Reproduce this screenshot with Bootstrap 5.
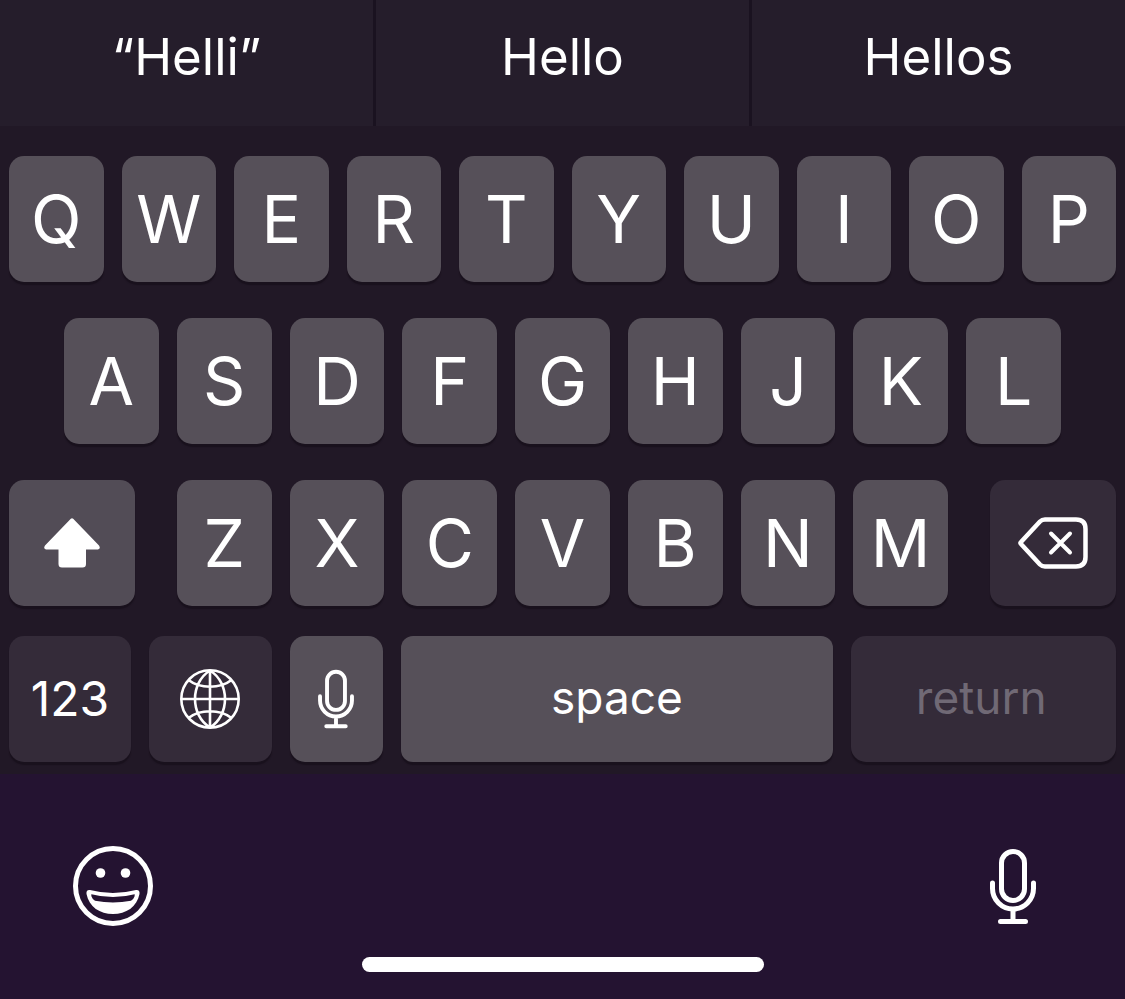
<!DOCTYPE html>
<html lang="en">
<head>
<meta charset="utf-8">
<meta name="viewport" content="width=device-width, initial-scale=1">
<title>Keyboard</title>
<link href="https://cdn.jsdelivr.net/npm/bootstrap@5.3.0/dist/css/bootstrap.min.css" rel="stylesheet">
<style>
  body { background: #241331; color: #fff; font-family: Inter, "Liberation Sans", sans-serif; }
  button { font-family: inherit; }
  .suggestions { background: #251d2b; height: 126px; }
  .suggestion { flex: 1 1 0; border: 0; background: transparent; color: #fff; font-size: 51px; line-height: 60px; padding: 0 0 12px; }
  .suggestion.middle { border: solid #1a1220; border-width: 0 3px; flex-grow: 1; }
  .keys { background: #211826; padding: 30px 9px 12px; }
  .key-row { gap: 18px; margin-bottom: 36px; }
  .key-row.inset { padding: 0 55px; }
  .key-row.tight { margin-bottom: 30px; }
  .key-row:last-child { margin-bottom: 0; }
  .key { flex: 94 1 0; min-width: 0; height: 126px; padding: 0; border: 0; border-radius: 15px; background: #565059; color: #fff; font-size: 66px; line-height: 80px; box-shadow: 0 3px 1px #19111d; display: flex; align-items: center; justify-content: center; }
  .key svg { flex: none; }
  .key.dark { background: #342b39; }
  .key.shift { flex-grow: 125; margin-right: 24px; background: #524c56; }
  .key.delete { flex-grow: 125; margin-left: 24px; }
  .key.mode { flex-grow: 122; }
  .key.globe { flex-grow: 123; }
  .key.numbers { font-size: 48px; }
  .key.word { font-size: 46px; padding-bottom: 4px; }
  .key.space { flex-grow: 432; border-radius: 12px; }
  .key.return { flex-grow: 262; color: #706975; padding-right: 4px; }
  .tray { padding: 72px 89px 0 73px; }
  .tray button { padding: 0; border: 0; background: transparent; color: #fff; line-height: 0; }
  .home-area { padding-bottom: 27px; }
  .home-bar { width: 402px; max-width: 60%; height: 15px; border-radius: 8px; background: #fff; }
</style>
</head>
<body>
<svg class="d-none" aria-hidden="true">
  <symbol id="mic" viewBox="0 -1 46 77">
    <g fill="none" stroke="currentColor" stroke-width="5" stroke-linecap="round">
      <rect x="11.500" y="2.500" width="23" height="49" rx="11.500"/>
      <path d="M2.500 34v5.500a20.500 20.500 0 0 0 41 0V34M23 61v11M10.500 72.500h25"/>
    </g>
  </symbol>
</svg>
<main class="d-flex flex-column min-vh-100">
  <div class="suggestions d-flex">
    <button type="button" class="suggestion">“Helli”</button>
    <button type="button" class="suggestion middle">Hello</button>
    <button type="button" class="suggestion">Hellos</button>
  </div>
  <div class="keys">
    <div class="key-row d-flex">
      <button type="button" class="key">Q</button>
      <button type="button" class="key">W</button>
      <button type="button" class="key">E</button>
      <button type="button" class="key">R</button>
      <button type="button" class="key">T</button>
      <button type="button" class="key">Y</button>
      <button type="button" class="key">U</button>
      <button type="button" class="key">I</button>
      <button type="button" class="key">O</button>
      <button type="button" class="key">P</button>
    </div>
    <div class="key-row inset d-flex">
      <button type="button" class="key">A</button>
      <button type="button" class="key">S</button>
      <button type="button" class="key">D</button>
      <button type="button" class="key">F</button>
      <button type="button" class="key">G</button>
      <button type="button" class="key">H</button>
      <button type="button" class="key">J</button>
      <button type="button" class="key">K</button>
      <button type="button" class="key">L</button>
    </div>
    <div class="key-row tight d-flex">
      <button type="button" class="key shift" aria-label="Shift">
        <svg width="56" height="50" viewBox="0 0 56 50" fill="currentColor"><path d="M26.800 .8Q28 -.2 29.200 .8L55 27.500Q57 31 54 31.500H42V46Q42 49.500 38.500 49.500H18Q14.500 49.500 14.500 46V31.500H2Q-1 31 1 27.500Z"/></svg>
      </button>
      <button type="button" class="key">Z</button>
      <button type="button" class="key">X</button>
      <button type="button" class="key">C</button>
      <button type="button" class="key">V</button>
      <button type="button" class="key">B</button>
      <button type="button" class="key">N</button>
      <button type="button" class="key">M</button>
      <button type="button" class="key dark delete" aria-label="Delete">
        <svg width="70" height="52" viewBox="0 0 70 52" fill="none" stroke="currentColor" stroke-width="4.500" stroke-linecap="round" stroke-linejoin="round"><path d="M27 2.500H58Q67.500 2.500 67.500 12V40Q67.500 49.500 58 49.500H27Q24 49.500 22 47.500L3 27Q2 26 3 25L22 4.500Q24 2.500 27 2.500Z"/><path stroke-width="4" d="M33 16.500L52 35.500M52 16.500L33 35.500"/></svg>
      </button>
    </div>
    <div class="key-row d-flex">
      <button type="button" class="key dark mode numbers">123</button>
      <button type="button" class="key dark globe" aria-label="Next keyboard">
        <svg width="60" height="60" viewBox="0 0 60 60" fill="none" stroke="currentColor" stroke-width="2.600"><circle cx="30" cy="30" r="28.700"/><path d="M30 1V59M1 30H59M30 1.500C10 14 10 46 30 58.500M30 1.500C50 14 50 46 30 58.500M8.500 11C20 20 40 20 51.500 11M8.500 49C20 40 40 40 51.500 49"/></svg>
      </button>
      <button type="button" class="key" aria-label="Voice input"><svg width="36" height="60"><use href="#mic"/></svg></button>
      <button type="button" class="key word space">space</button>
      <button type="button" class="key dark word return">return</button>
    </div>
  </div>
  <div class="tray flex-grow-1">
    <div class="d-flex justify-content-between align-items-center">
      <button type="button" aria-label="Emoji">
        <svg width="80" height="80" viewBox="0 0 80 80" fill="currentColor"><circle cx="40" cy="40" r="37.500" fill="none" stroke="currentColor" stroke-width="5"/><circle cx="27.500" cy="27" r="4.800"/><circle cx="52.500" cy="27" r="4.800"/><path fill-rule="evenodd" d="M17 44Q40 50 63 44Q67 43.500 66.500 48C64 61 53 68 40 68S16 61 13.500 48Q13 43.500 17 44ZM18.500 48.200Q18 48 18.500 50.500Q19.500 53.500 22 54.800Q40 58 58 54.800Q60.500 53.500 61.500 50.500Q62 48 61.500 48.200Q40 54 18.500 48.200Z"/></svg>
      </button>
      <button type="button" aria-label="Dictate"><svg width="46" height="77"><use href="#mic"/></svg></button>
    </div>
  </div>
  <div class="home-area d-flex justify-content-center"><div class="home-bar"></div></div>
</main>
<script src="https://cdn.jsdelivr.net/npm/bootstrap@5.3.0/dist/js/bootstrap.bundle.min.js"></script>
</body>
</html>
